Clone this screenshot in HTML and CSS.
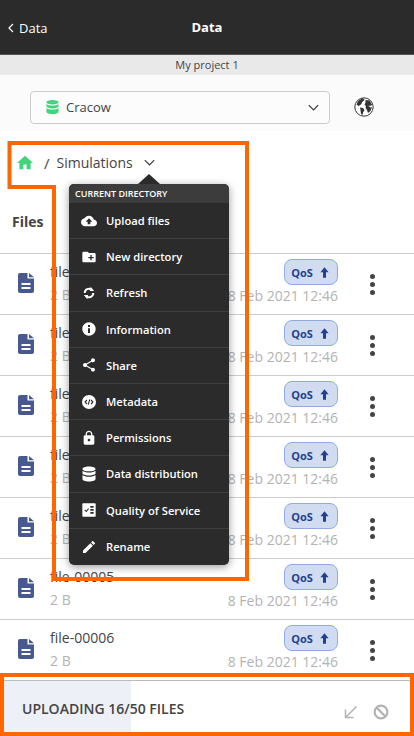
FILE: index.html
```html
<!DOCTYPE html>
<html lang="en">
<head>
    <meta charset="UTF-8">
    <meta name="viewport" content="width=device-width, initial-scale=1.0">
    <title>Data</title>
    <link rel="stylesheet" href="styles.css">
</head>
<body>
    <svg class="sprites" width="0" height="0">
        <symbol id="doc" viewBox="0 0 16 20"><path d="M2 0h7.500v5.500H16V18a2 2 0 0 1-2 2H2a2 2 0 0 1-2-2V2a2 2 0 0 1 2-2zm9 0 5 4.200H11zM3.500 10v2h9v-2zm0 4v2h9v-2z" fill-rule="evenodd"/></symbol>
        <symbol id="arrow-up" viewBox="0 0 12 14"><path d="M6 0l5.500 6.500H8V14H4V6.500H.5z"/></symbol>
        <symbol id="chevron" viewBox="0 0 14 8"><path d="M1 1l6 6 6-6" fill="none" stroke="currentColor" stroke-width="1.400"/></symbol>
    </svg>

    <div class="page">
        <header class="topbar">
            <a class="back"><svg width="6" height="10" viewBox="0 0 6 10"><path d="M5 1L1 5l4 4" fill="none" stroke="#fff" stroke-width="1.200"/></svg>Data</a>
            <h1>Data</h1>
        </header>
        <div class="project">My project 1</div>
        <div class="storage">
            <div class="select">
                <svg class="db" width="13" height="14" viewBox="0 0 14 15"><path d="M7 0c3.800 0 6.500 1 6.500 2.400S10.800 4.800 7 4.800.5 3.800.5 2.400 3.200 0 7 0zM.5 4.200C1.800 5.400 4.300 6 7 6s5.200-.6 6.500-1.800v2.600C13.500 8.100 10.800 9 7 9S.5 8.100.5 6.800zm0 4.300C1.800 9.700 4.300 10.300 7 10.300s5.200-.6 6.500-1.800v4C13.500 13.900 10.800 15 7 15S.5 13.900.5 12.500z"/></svg>
                <span class="select-label">Cracow</span>
                <svg class="select-arrow" width="11" height="7"><use href="#chevron"/></svg>
            </div>
            <svg class="globe" width="20" height="20" viewBox="0 0 20 20"><circle cx="10" cy="10" r="9.200" fill="#fff" stroke="#333" stroke-width="1"/><path d="M2.500 7.500L4 4l4-2.500 2.500.5-.5 1.500-2 1.500-.5 2-2 1.500-1 .5zM6 10.500l3 .5 1.500 2-1.500 2.500-.5 2.500-1.500-1-.5-4zM11.500 3l4 .5 2.500 4-1 1.500-1-.5-1.500.5 2 1.500 1.500-.5-1.500 4-2.500 2-1-3-1.500-2 .5-2-1.500-1 1-2.500z" fill="#333"/></svg>
        </div>

        <div class="crumbs">
            <svg class="home" width="16" height="15" viewBox="2 3 20 17"><path d="M10 20v-6h4v6h5v-8h3L12 3 2 12h3v8z"/></svg>
            <span class="sep">/</span>
            <span class="dir">Simulations</span>
            <svg class="dir-arrow" width="11" height="7"><use href="#chevron"/></svg>
        </div>

        <div class="files-head">Files</div>

        <ul class="files">
            <li class="file">
                <svg class="file-icon"><use href="#doc"/></svg>
                <div class="file-main"><div class="file-name">file-00000</div><div class="file-size">2 B</div></div>
                <div class="file-side"><span class="qos">QoS <svg width="9" height="11"><use href="#arrow-up"/></svg></span><span class="file-date">8 Feb 2021 12:46</span></div>
                <div class="dots"><i></i><i></i><i></i></div>
            </li>
            <li class="file">
                <svg class="file-icon"><use href="#doc"/></svg>
                <div class="file-main"><div class="file-name">file-00001</div><div class="file-size">2 B</div></div>
                <div class="file-side"><span class="qos">QoS <svg width="9" height="11"><use href="#arrow-up"/></svg></span><span class="file-date">8 Feb 2021 12:46</span></div>
                <div class="dots"><i></i><i></i><i></i></div>
            </li>
            <li class="file">
                <svg class="file-icon"><use href="#doc"/></svg>
                <div class="file-main"><div class="file-name">file-00002</div><div class="file-size">2 B</div></div>
                <div class="file-side"><span class="qos">QoS <svg width="9" height="11"><use href="#arrow-up"/></svg></span><span class="file-date">8 Feb 2021 12:46</span></div>
                <div class="dots"><i></i><i></i><i></i></div>
            </li>
            <li class="file">
                <svg class="file-icon"><use href="#doc"/></svg>
                <div class="file-main"><div class="file-name">file-00003</div><div class="file-size">2 B</div></div>
                <div class="file-side"><span class="qos">QoS <svg width="9" height="11"><use href="#arrow-up"/></svg></span><span class="file-date">8 Feb 2021 12:46</span></div>
                <div class="dots"><i></i><i></i><i></i></div>
            </li>
            <li class="file">
                <svg class="file-icon"><use href="#doc"/></svg>
                <div class="file-main"><div class="file-name">file-00004</div><div class="file-size">2 B</div></div>
                <div class="file-side"><span class="qos">QoS <svg width="9" height="11"><use href="#arrow-up"/></svg></span><span class="file-date">8 Feb 2021 12:46</span></div>
                <div class="dots"><i></i><i></i><i></i></div>
            </li>
            <li class="file">
                <svg class="file-icon"><use href="#doc"/></svg>
                <div class="file-main"><div class="file-name">file-00005</div><div class="file-size">2 B</div></div>
                <div class="file-side"><span class="qos">QoS <svg width="9" height="11"><use href="#arrow-up"/></svg></span><span class="file-date">8 Feb 2021 12:46</span></div>
                <div class="dots"><i></i><i></i><i></i></div>
            </li>
            <li class="file">
                <svg class="file-icon"><use href="#doc"/></svg>
                <div class="file-main"><div class="file-name">file-00006</div><div class="file-size">2 B</div></div>
                <div class="file-side"><span class="qos">QoS <svg width="9" height="11"><use href="#arrow-up"/></svg></span><span class="file-date">8 Feb 2021 12:46</span></div>
                <div class="dots"><i></i><i></i><i></i></div>
            </li>
        </ul>

        <div class="uploads">
            <div class="uploads-progress"></div>
            <span class="uploads-label">UPLOADING 16/50 FILES</span>
            <svg class="uploads-icon" width="14" height="14" viewBox="0 0 14 14"><path d="M12.500 1.500L2 12M1.500 4.500V12.500H9.500" fill="none" stroke="#b3b3b3" stroke-width="1.500"/></svg>
            <svg class="uploads-icon" width="16" height="16" viewBox="0 0 16 16"><circle cx="8" cy="8" r="6.400" fill="none" stroke="#b3b3b3" stroke-width="2.200"/><path d="M3.500 3.500l9 9" stroke="#b3b3b3" stroke-width="2.200"/></svg>
        </div>
    </div>

    <div class="menu">
        <div class="menu-title">CURRENT DIRECTORY</div>
        <div class="menu-item"><svg viewBox="0 0 24 24"><path d="M19.350 10.040C18.670 6.590 15.640 4 12 4 9.110 4 6.600 5.640 5.350 8.040 2.340 8.360 0 10.910 0 14c0 3.310 2.690 6 6 6h13c2.760 0 5-2.240 5-5 0-2.640-2.050-4.780-4.650-4.960zM14 13v4h-4v-4H7l5-5 5 5h-3z"/></svg>Upload files</div>
        <div class="menu-item"><svg viewBox="0 0 24 24"><path d="M20 6h-8l-2-2H4c-1.110 0-1.990.89-1.990 2L2 18c0 1.110.89 2 2 2h16c1.110 0 2-.89 2-2V8c0-1.110-.89-2-2-2zm-1 8h-3v3h-2v-3h-3v-2h3V9h2v3h3v2z"/></svg>New directory</div>
        <div class="menu-item"><svg viewBox="-2 -2 28 28"><path d="M4.500 12a7.500 7.500 0 0 1 12-6M19.500 12a7.500 7.500 0 0 1-12 6" fill="none" stroke="#fff" stroke-width="3.400"/><path d="M15 1l6 7.500H13.500zM9 23L3 15.500H10.500z"/></svg>Refresh</div>
        <div class="menu-item"><svg viewBox="0 0 24 24"><path d="M12 2C6.480 2 2 6.480 2 12s4.480 10 10 10 10-4.480 10-10S17.520 2 12 2zm1.500 16h-3v-7h3v7zm0-9h-3V6h3v3z"/></svg>Information</div>
        <div class="menu-item"><svg viewBox="0 0 24 24"><path d="M18 16.080c-.76 0-1.440.3-1.960.77L8.910 12.700c.05-.23.09-.46.09-.7s-.04-.47-.09-.7l7.050-4.110c.54.5 1.250.81 2.040.81 1.660 0 3-1.340 3-3s-1.340-3-3-3-3 1.340-3 3c0 .24.04.47.09.7L8.040 9.810C7.500 9.310 6.790 9 6 9c-1.660 0-3 1.340-3 3s1.340 3 3 3c.79 0 1.500-.31 2.040-.81l7.120 4.160c-.05.21-.08.43-.08.65 0 1.610 1.310 2.920 2.920 2.920 1.610 0 2.920-1.310 2.920-2.920s-1.310-2.920-2.920-2.920z"/></svg>Share</div>
        <div class="menu-item"><svg viewBox="0 0 24 24"><circle cx="12" cy="12" r="10.500"/><path d="M9 9l-3 3 3 3M15 9l3 3-3 3M13.200 8l-2.400 8" fill="none" stroke="#2b2b2b" stroke-width="1.600"/></svg>Metadata</div>
        <div class="menu-item"><svg viewBox="0 0 24 24"><path d="M18 8h-1V6c0-2.760-2.240-5-5-5S7 3.240 7 6v2H6c-1.100 0-2 .9-2 2v10c0 1.100.9 2 2 2h12c1.100 0 2-.9 2-2V10c0-1.100-.9-2-2-2zm-6 9c-1.100 0-2-.9-2-2s.9-2 2-2 2 .9 2 2-.9 2-2 2zm3.100-9H8.900V6c0-1.710 1.390-3.100 3.100-3.100 1.710 0 3.100 1.390 3.100 3.100v2z"/></svg>Permissions</div>
        <div class="menu-item"><svg viewBox="-1 -.5 16 16"><path d="M7 0c3.800 0 6.500 1 6.500 2.400S10.800 4.800 7 4.800.5 3.800.5 2.400 3.200 0 7 0zM.5 4.200C1.800 5.400 4.300 6 7 6s5.200-.6 6.500-1.800v2.600C13.500 8.100 10.800 9 7 9S.5 8.100.5 6.800zm0 4.300C1.800 9.700 4.300 10.300 7 10.300s5.200-.6 6.500-1.800v4C13.500 13.900 10.800 15 7 15S.5 13.900.5 12.500z"/></svg>Data distribution</div>
        <div class="menu-item"><svg viewBox="0 0 24 24"><path fill-rule="evenodd" d="M3 2h18a1 1 0 0 1 1 1v18a1 1 0 0 1-1 1H3a1 1 0 0 1-1-1V3a1 1 0 0 1 1-1zm11 4v2.500h5V6zm0 4.500V13h5v-2.500zm0 4.500v2.500h5V15zM5 12.500l3 3 4-5-1.300-1-2.900 3.500-1.500-1.700z"/></svg>Quality of Service</div>
        <div class="menu-item"><svg viewBox="0 0 24 24"><path d="M3 17.250V21h3.750L17.810 9.940l-3.750-3.750L3 17.250zM20.710 7.040c.39-.39.39-1.020 0-1.410l-2.340-2.340c-.39-.39-1.020-.39-1.410 0l-1.830 1.830 3.750 3.750 1.830-1.830z"/></svg>Rename</div>
    </div>

    <svg class="marks" width="414" height="736">
        <path d="M9.500 143H247V579H54V187H9.500z"/>
        <rect x="2" y="675" width="410" height="59"/>
    </svg>
</body>
</html>
```

FILE: styles.css
```css
* {
    box-sizing: border-box;
}

html, body {
    margin: 0;
    height: 100%;
    overflow: hidden;
}

body {
    font-family: "Open Sans", sans-serif;
    background-color: #fff;
    color: #444;
    position: relative;
}

.sprites {
    position: absolute;
}

.page {
    display: flex;
    flex-direction: column;
    height: 736px;
}

.topbar {
    flex: 0 0 55px;
    background-color: #2b2b2b;
    color: #fff;
    display: flex;
    align-items: center;
    justify-content: center;
    position: relative;
    border-bottom: 1px solid #555;
}

.topbar h1 {
    margin: 0;
    font-size: 13px;
    font-weight: 700;
}

.back {
    position: absolute;
    left: 8px;
    top: 19px;
    display: flex;
    align-items: center;
    gap: 5px;
    font-size: 13px;
}

.project {
    flex: 0 0 20px;
    background-color: #e9e9e9;
    font-size: 11px;
    line-height: 20px;
    text-align: center;
}

.storage {
    flex: 0 0 56px;
    background-color: #fbfbfb;
    display: flex;
    align-items: center;
    padding: 8px 0 0 30px;
}

.select {
    width: 300px;
    height: 33px;
    background-color: #fcfcfc;
    border: 1px solid #ccc;
    border-radius: 4px;
    display: flex;
    align-items: center;
    padding: 0 10px 0 15px;
}

.db {
    fill: #42d37c;
}

.select-label {
    flex: 1;
    margin-left: 7px;
    font-size: 13px;
}

.select-arrow {
    color: #333;
}

.globe {
    margin-left: 24px;
}

.crumbs {
    flex: 0 0 67px;
    display: flex;
    align-items: center;
    padding: 0 0 4px 17px;
    font-size: 14px;
}

.home {
    fill: #42d37c;
}

.sep {
    margin-left: 11px;
    font-size: 15px;
}

.dir {
    margin-left: 7px;
}

.dir-arrow {
    margin-left: 11px;
    color: #333;
}

.files-head {
    flex: 0 0 55px;
    padding: 14px 0 0 12px;
    font-size: 14px;
    font-weight: 700;
    line-height: 20px;
}

.files {
    flex: 1;
    margin: 0;
    padding: 0;
    list-style: none;
    overflow: hidden;
}

.file {
    height: 61px;
    border-top: 1px solid #ccc;
    display: grid;
    grid-template-columns: 50px 1fr auto 76px;
    align-items: center;
}

.file-icon {
    width: 16px;
    height: 20px;
    margin: 0 0 2px 18px;
    fill: #47598f;
}

.file-main {
    align-self: start;
    padding-top: 8px;
}

.file-name {
    font-size: 14px;
    line-height: 20px;
}

.file-size {
    margin-top: 4px;
    font-size: 14px;
    line-height: 18px;
    color: #b3b3b3;
}

.file-side {
    align-self: start;
    padding-top: 5px;
    display: flex;
    flex-direction: column;
    align-items: flex-end;
}

.qos {
    width: 54px;
    height: 26px;
    padding-right: 2px;
    background-color: #d1dcf0;
    border: 1px solid #8fabe3;
    border-radius: 8px;
    color: #23408e;
    fill: #23408e;
    font-size: 11px;
    font-weight: 700;
    display: flex;
    align-items: center;
    justify-content: center;
    gap: 7px;
}

.file-date {
    margin-top: 2px;
    font-size: 14px;
    line-height: 18px;
    color: #b3b3b3;
}

.dots {
    display: flex;
    flex-direction: column;
    align-items: center;
    gap: 3px;
    margin-left: 16px;
    width: 36px;
}

.dots i {
    width: 5px;
    height: 5px;
    border-radius: 50%;
    background-color: #444;
}

.uploads {
    flex: 0 0 56px;
    border-top: 1px solid #bbb;
    position: relative;
    display: flex;
    align-items: center;
    padding: 0 25px 0 22px;
    gap: 15px;
}

.uploads-progress {
    position: absolute;
    left: 0;
    top: 0;
    bottom: 0;
    width: 131px;
    background-color: #eef0f8;
}

.uploads-label {
    position: relative;
    flex: 1;
    font-size: 14px;
    font-weight: 600;
    margin-top: -1px;
}

.uploads-icon {
    position: relative;
    margin-top: 6px;
}

/* dropdown over the list */
.menu {
    position: absolute;
    left: 69px;
    top: 184px;
    width: 160px;
    background-color: #2b2b2b;
    border-radius: 5px;
    box-shadow: 0 2px 8px rgba(0, 0, 0, 0.4);
    color: #fff;
}

.menu::before {
    content: "";
    position: absolute;
    left: 69px;
    top: -10px;
    border: 11px solid transparent;
    border-top: 0;
    border-bottom: 10px solid #2b2b2b;
}

.menu-title {
    height: 19px;
    padding-left: 6px;
    background-color: #3c3c3c;
    border-radius: 5px 5px 0 0;
    font-size: 9px;
    font-weight: 600;
    line-height: 19px;
}

.menu-item {
    height: 36.2px;
    display: flex;
    align-items: center;
    gap: 9px;
    padding-left: 12px;
    border-bottom: 1px solid #3f3f3f;
    font-size: 11.2px;
    font-weight: 600;
}

.menu-item:last-child {
    border-bottom: 0;
}

.menu-item svg {
    width: 16px;
    height: 16px;
    fill: #fff;
}

/* orange annotation frames */
.marks {
    position: absolute;
    left: 0;
    top: 0;
    fill: none;
    stroke: #ff6600;
    stroke-width: 4;
    pointer-events: none;
}
```
